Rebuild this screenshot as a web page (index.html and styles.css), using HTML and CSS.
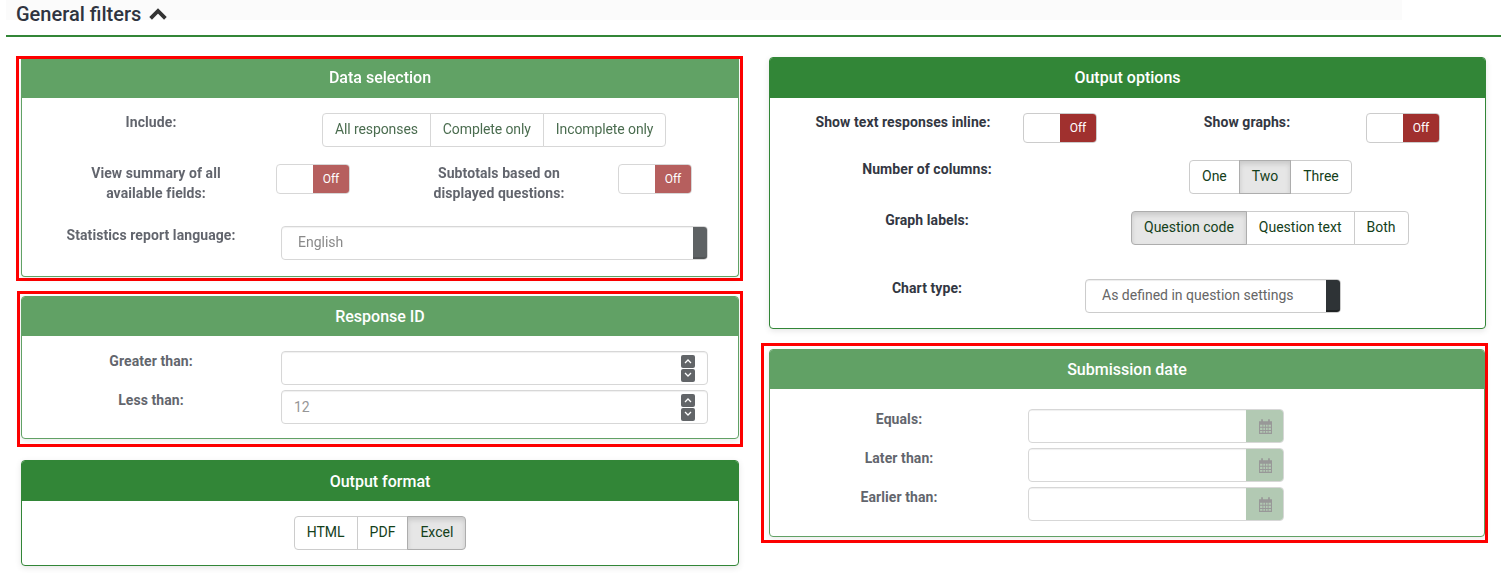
FILE: index.html
```html
<!DOCTYPE html>
<html lang="en">
<head>
<meta charset="utf-8">
<title>General filters</title>
<link rel="stylesheet" href="styles.css">
</head>
<body>
<header class="page-head">
  <div class="title-bar">
    <h1 class="title">General filters
      <svg class="chev" viewBox="0 0 18 12" aria-hidden="true"><path d="M1.6 10.4 9 3 16.4 10.4" fill="none" stroke="#333" stroke-width="3.8"/></svg>
    </h1>
  </div>
</header>
<main class="columns">
  <div class="col col-left">
    <section class="slot hl slot-data">
      <div class="card faded card-data">
        <h2 class="card-head head-39">Data selection</h2>
        <div class="card-body body-data">
          <div class="row">
            <div class="lbl up w258">Include:</div>
            <div class="group tight ml42"><span class="btn">All responses</span><span class="btn">Complete only</span><span class="btn">Incomplete only</span></div>
          </div>
          <div class="row mt17 row-40">
            <div class="lbl up ml42 w184">View summary of all<br>available fields:</div>
            <div class="toggle ml28"><span class="on"></span><span class="off">Off</span></div>
            <div class="lbl up ml57 w184">Subtotals based on<br>displayed questions:</div>
            <div class="toggle ml27"><span class="on"></span><span class="off">Off</span></div>
          </div>
          <div class="row mt22">
            <div class="lbl up w258">Statistics report language:</div>
            <div class="select ml1 w427"><span class="select-text">English</span><span class="handle"></span></div>
          </div>
        </div>
      </div>
    </section>
    <section class="slot hl slot-resp">
      <div class="card faded">
        <h2 class="card-head head-40">Response ID</h2>
        <div class="card-body body-resp">
          <div class="row">
            <div class="lbl w258">Greater than:</div>
            <div class="input ml1 w427"><span class="input-text"></span>
              <span class="spin"><svg viewBox="0 0 14 27" aria-hidden="true"><rect width="14" height="13" y="0" rx="2" fill="#33373b"/><rect width="14" height="13" y="14" rx="2" fill="#33373b"/><path d="M4 8l3-3 3 3M4 18l3 3 3-3" fill="none" stroke="#fff" stroke-width="1.3"/></svg></span>
            </div>
          </div>
          <div class="row mt5">
            <div class="lbl w258">Less than:</div>
            <div class="input ml1 w427"><span class="input-text">12</span>
              <span class="spin"><svg viewBox="0 0 14 27" aria-hidden="true"><rect width="14" height="13" y="0" rx="2" fill="#33373b"/><rect width="14" height="13" y="14" rx="2" fill="#33373b"/><path d="M4 8l3-3 3 3M4 18l3 3 3-3" fill="none" stroke="#fff" stroke-width="1.3"/></svg></span>
            </div>
          </div>
        </div>
      </div>
    </section>
    <section class="slot slot-format">
      <div class="card">
        <h2 class="card-head head-format">Output format</h2>
        <div class="card-body body-format">
          <div class="group"><span class="btn">HTML</span><span class="btn">PDF</span><span class="btn active">Excel</span></div>
        </div>
      </div>
    </section>
  </div>
  <div class="col col-right">
    <section class="slot slot-options">
      <div class="card">
        <h2 class="card-head">Output options</h2>
        <div class="card-body body-options">
          <div class="row">
            <div class="lbl up ml25 w216">Show text responses inline:</div>
            <div class="toggle ml12"><span class="on"></span><span class="off">Off</span></div>
            <div class="lbl up ml50 w200">Show graphs:</div>
            <div class="toggle ml19"><span class="on"></span><span class="off">Off</span></div>
          </div>
          <div class="row mt17">
            <div class="lbl up w314">Number of columns:</div>
            <div class="group ml105"><span class="btn">One</span><span class="btn active">Two</span><span class="btn">Three</span></div>
          </div>
          <div class="row mt17">
            <div class="lbl up w314">Graph labels:</div>
            <div class="group ml47"><span class="btn active">Question code</span><span class="btn">Question text</span><span class="btn">Both</span></div>
          </div>
          <div class="row mt34">
            <div class="lbl up w314">Chart type:</div>
            <div class="select ml1 w255"><span class="select-text">As defined in question settings</span><span class="handle"></span></div>
          </div>
        </div>
      </div>
    </section>
    <section class="slot hl slot-date">
      <div class="card faded">
        <h2 class="card-head head-40">Submission date</h2>
        <div class="card-body body-date">
          <div class="row">
            <div class="lbl w258">Equals:</div>
            <div class="date"><span class="date-field"></span><span class="addon"><svg class="cal" viewBox="1 1 12 13" preserveAspectRatio="none" aria-hidden="true"><path d="M1 3h2V1.2h1.6V3h4.8V1.2H11V3h2v11H1zM2 6v1.7h2.2V6zm3 0v1.7h1.6V6zm2.4 0v1.7H9V6zm2.4 0v1.7H12V6zM2 8.5v2h2.2v-2zm3 0v2h1.6v-2zm2.4 0v2H9v-2zm2.4 0v2H12v-2zM2 11.3V13h2.2v-1.7zm3 0V13h1.6v-1.7zm2.4 0V13H9v-1.7zm2.4 0V13H12v-1.7z" fill="#7a7a7a" fill-rule="evenodd"/></svg></span></div>
          </div>
          <div class="row mt5">
            <div class="lbl w258">Later than:</div>
            <div class="date"><span class="date-field"></span><span class="addon"><svg class="cal" viewBox="1 1 12 13" preserveAspectRatio="none" aria-hidden="true"><path d="M1 3h2V1.2h1.6V3h4.8V1.2H11V3h2v11H1zM2 6v1.7h2.2V6zm3 0v1.7h1.6V6zm2.4 0v1.7H9V6zm2.4 0v1.7H12V6zM2 8.5v2h2.2v-2zm3 0v2h1.6v-2zm2.4 0v2H9v-2zm2.4 0v2H12v-2zM2 11.3V13h2.2v-1.7zm3 0V13h1.6v-1.7zm2.4 0V13H9v-1.7zm2.4 0V13H12v-1.7z" fill="#7a7a7a" fill-rule="evenodd"/></svg></span></div>
          </div>
          <div class="row mt5">
            <div class="lbl w258">Earlier than:</div>
            <div class="date"><span class="date-field"></span><span class="addon"><svg class="cal" viewBox="1 1 12 13" preserveAspectRatio="none" aria-hidden="true"><path d="M1 3h2V1.2h1.6V3h4.8V1.2H11V3h2v11H1zM2 6v1.7h2.2V6zm3 0v1.7h1.6V6zm2.4 0v1.7H9V6zm2.4 0v1.7H12V6zM2 8.5v2h2.2v-2zm3 0v2h1.6v-2zm2.4 0v2H9v-2zm2.4 0v2H12v-2zM2 11.3V13h2.2v-1.7zm3 0V13h1.6v-1.7zm2.4 0V13H9v-1.7zm2.4 0V13H12v-1.7z" fill="#7a7a7a" fill-rule="evenodd"/></svg></span></div>
          </div>
        </div>
      </div>
    </section>
  </div>
</main>
</body>
</html>
```
FILE: styles.css
```css
* { box-sizing: border-box; }
html, body { margin: 0; padding: 0; background: #fff; }
body {
  font-family: Roboto, "Liberation Sans", sans-serif;
  font-size: 14px;
  line-height: 20px;
  color: #333742;
  height: 573px;
  overflow: hidden;
}

.page-head {
  margin: 0 4px 0 6px;
  height: 37px;
  border-bottom: 2px solid #328637;
}
.title-bar { width: 1396px; height: 20px; background: #fbfbfb; }
.title {
  margin: 0;
  padding-left: 10px;
  font-size: 20px;
  line-height: 28px;
  font-weight: 500;
  color: #2f3440;
  white-space: nowrap;
}
.chev { width: 18px; height: 12px; vertical-align: 1px; margin-left: 3px; }

.columns { display: flex; align-items: flex-start; }
.col { display: flex; flex-direction: column; }
.col-left { width: 726px; margin-left: 17px; }
.col-right { width: 727px; margin-left: 18px; }

.slot { display: block; }
.hl { border: 3px solid #f00; }
.slot-data { margin: 19px 0 0 -1px; padding: 0 1px 1px 2px; height: 225px; }
.slot-resp { margin-top: 10px; padding: 2px 1px 5px; height: 156px; }
.slot-format { margin-top: 13px; padding: 0 4px; }
.slot-options { margin-top: 20px; padding: 0 0 0 8px; width: 725px; }
.slot-date { margin-top: 14px; padding: 3px 0 3px 5px; height: 200px; }

.card {
  border: 1px solid #328637;
  border-radius: 4px;
  background: #fff;
  box-shadow: 0 2px 6px rgba(0, 0, 0, .1);
  overflow: hidden;
}
.faded { opacity: .77; }
.card-data { border-top: 0; border-radius: 0 0 4px 4px; }
.card-head {
  margin: -1px -1px 0;
  height: 41px;
  background: #328637;
  color: #fff;
  font-size: 16px;
  font-weight: 500;
  line-height: 41px;
  text-align: center;
}
.head-format { line-height: 43px; }
.head-39 { margin-top: 0; height: 39px; line-height: 37px; }
.head-40 { margin-top: 0; height: 39px; line-height: 39px; }

.card-body { display: flow-root; }
.body-data { padding: 15px 0 16px; }
.body-resp { padding: 15px 0 14px; }
.body-format { padding: 15px 0 15px; display: flex; justify-content: center; }
.body-options { padding: 15px 0 15px; }
.body-date { padding: 20px 0 15px; }

.row { display: flex; align-items: flex-start; }
.row-40 { height: 40px; }
.mt5 { margin-top: 5px; }
.mt17 { margin-top: 17px; }
.mt22 { margin-top: 22px; }
.mt34 { margin-top: 34px; }

.ml1 { margin-left: 1px; }
.ml12 { margin-left: 12px; }
.ml19 { margin-left: 19px; }
.ml25 { margin-left: 25px; }
.ml27 { margin-left: 27px; }
.ml28 { margin-left: 28px; }
.ml42 { margin-left: 42px; }
.ml47 { margin-left: 47px; }
.ml50 { margin-left: 50px; }
.ml57 { margin-left: 57px; }
.ml105 { margin-left: 105px; }

.w184 { width: 184px; }
.w200 { width: 200px; }
.w216 { width: 216px; }
.w255 { width: 256px; }
.w258 { width: 258px; }
.w314 { width: 314px; }
.w427 { width: 427px; }

.lbl { font-weight: 700; text-align: center; flex: none; white-space: nowrap; letter-spacing: .08px; }
.up { margin-top: -1px; }

.group { display: inline-flex; flex: none; }
.tight { letter-spacing: -.1px; }
.btn {
  display: block;
  height: 34px;
  padding: 5px 12px 7px;
  border: 1px solid #ccc;
  margin-left: -1px;
  background: #fff;
  color: #14401a;
  white-space: nowrap;
}
.btn:first-child { margin-left: 0; border-radius: 4px 0 0 4px; }
.btn:last-child { border-radius: 0 4px 4px 0; }
.btn.active {
  position: relative;
  background: #e6e6e6;
  border-color: #adadad;
  box-shadow: inset 0 3px 5px rgba(0, 0, 0, .125);
}

.toggle {
  display: flex;
  flex: none;
  width: 74px;
  height: 30px;
  border: 1px solid #ccc;
  border-radius: 4px;
  overflow: hidden;
  background: #fff;
}
.toggle .on { width: 36px; }
.toggle .off {
  width: 36px;
  background: #a0302e;
  color: #fff;
  font-size: 12px;
  line-height: 28px;
  text-align: center;
}

.select, .input {
  display: flex;
  flex: none;
  height: 34px;
  border: 1px solid #ccc;
  border-radius: 4px;
  align-items: center;
  background: #fff;
  box-shadow: inset 0 1px 1px rgba(0, 0, 0, .075);
}
.select-text { flex: 1; padding: 0 0 2px 16px; color: #666; white-space: nowrap; }
.handle {
  width: 14px;
  height: 32px;
  background: #2e3336;
  border-radius: 0 3px 3px 0;
  border-bottom: 2px solid #1f2224;
}
.input-text { flex: 1; padding-left: 12px; color: #777; }
.spin { width: 14px; height: 27px; margin-right: 12px; }
.spin svg { display: block; width: 14px; height: 27px; }

.date {
  display: flex;
  flex: none;
  width: 256px;
  height: 34px;
  border: 1px solid #ccc;
  border-radius: 4px;
  overflow: hidden;
  background: #fff;
}
.date-field { flex: 1; box-shadow: inset 0 1px 1px rgba(0, 0, 0, .075); }
.addon {
  width: 38px;
  margin: -1px -1px -1px 0;
  background: #9cb99d;
  display: flex;
  align-items: center;
  justify-content: center;
}
.cal { width: 13px; height: 15px; }
```
